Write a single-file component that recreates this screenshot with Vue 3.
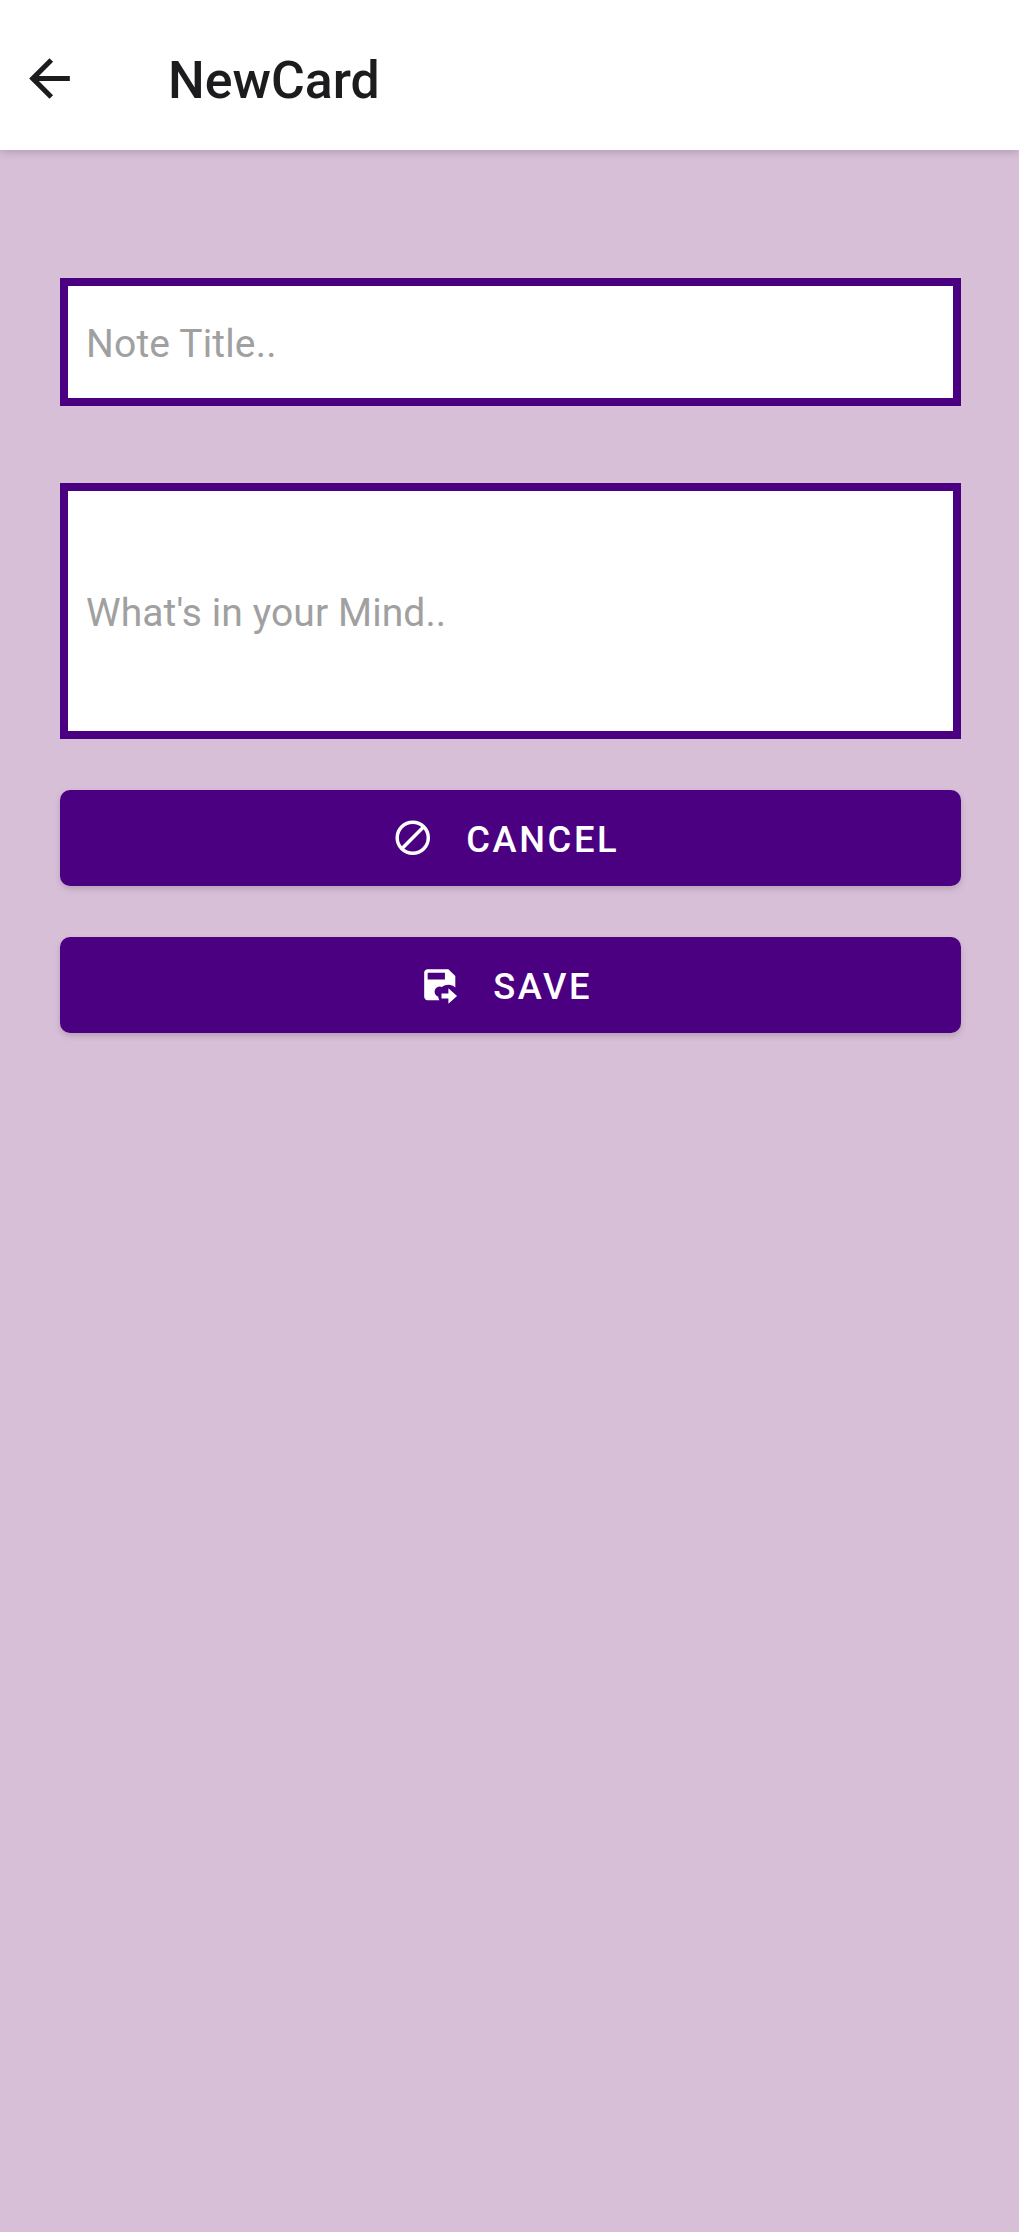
<script setup>
const title = 'NewCard'
const fields = [
  { id: 'note-title', hint: 'Note Title..' },
  { id: 'note-body', hint: "What's in your Mind.." },
]
</script>

<template>
  <div class="screen">
    <header class="app-bar">
      <svg class="back" viewBox="0 0 24 24" aria-label="Back">
        <path d="M20 11H7.83l5.59-5.59L12 4l-8 8 8 8 1.41-1.41L7.83 13H20v-2z" />
      </svg>
      <h1 class="heading">{{ title }}</h1>
    </header>
    <main class="form">
      <div v-for="f in fields" :key="f.id" class="field" :class="f.id">
        <span class="hint">{{ f.hint }}</span>
      </div>
      <button class="btn">
        <svg class="icon" viewBox="0 0 24 24">
          <circle cx="12" cy="12" r="9" />
          <path d="M5.8 18.2L18.2 5.8" />
        </svg>
        <span class="label">CANCEL</span>
      </button>
      <button class="btn">
        <svg class="icon solid" viewBox="0 0 24 24">
          <path d="M17 3H5C3.9 3 3 3.9 3 5V19C3 20.1 3.9 21 5 21H11.81C11.42 20.34 11.17 19.6 11.07 18.84C9.5 18.31 8.66 16.6 9.2 15.03C9.61 13.83 10.73 13 12 13C12.44 13 12.88 13.1 13.28 13.29C15.57 11.5 18.83 11.59 21 13.54V7L17 3M15 9H5V5H15V9M13 17H17V14L22 18.5L17 23V20H13V17" />
        </svg>
        <span class="label">SAVE</span>
      </button>
    </main>
  </div>
</template>

<style>
body {
  background: #d8bfd8;
}
</style>

<style scoped>
.screen {
  height: 2232px;
  display: flex;
  flex-direction: column;
  background: #d8bfd8;
  font-family: Roboto, sans-serif;
  overflow: hidden;
}
.app-bar {
  height: 149.5px;
  flex: none;
  box-sizing: border-box;
  display: flex;
  align-items: center;
  padding: 7px 0 0 19px;
  background: #fff;
  box-shadow: 0 2px 9px rgba(0, 0, 0, 0.19);
}
.back {
  width: 61px;
  height: 61px;
  fill: #1c1c1e;
}
.heading {
  margin: 5px 0 0 88px;
  font-size: 51.8px;
  line-height: 60px;
  font-weight: 500;
  color: #1c1c1e;
}
.form {
  display: flex;
  flex-direction: column;
  padding: 128px 58px 0 60px;
}
.field {
  box-sizing: border-box;
  display: flex;
  align-items: center;
  border: 8px solid #4b0082;
  background: #fff;
  padding: 4px 0 0 18px;
}
.note-title {
  height: 128.5px;
}
.note-title .hint {
  letter-spacing: 0.16px;
}
.note-body {
  height: 256px;
  margin-top: 76.6px;
}
.hint {
  font-size: 39px;
  line-height: 46px;
  letter-spacing: 0.09px;
  color: #a0a0a0;
}
.btn {
  height: 96.3px;
  margin: 51px 0 0;
  padding: 0 10px 0 0;
  border: 0;
  border-radius: 10px;
  display: flex;
  align-items: center;
  justify-content: center;
  background: #4b0082;
  color: #fff;
  font-family: inherit;
  box-shadow: 0 3px 6px rgba(0, 0, 0, 0.16);
}
.icon {
  width: 41.5px;
  height: 41.5px;
  fill: none;
  stroke: #fff;
  stroke-width: 2;
}
.icon.solid {
  fill: #fff;
  stroke: none;
}
.label {
  margin: 4px 0 0 33px;
  font-size: 36.3px;
  line-height: 44px;
  font-weight: 500;
  letter-spacing: 2.6px;
}
</style>
